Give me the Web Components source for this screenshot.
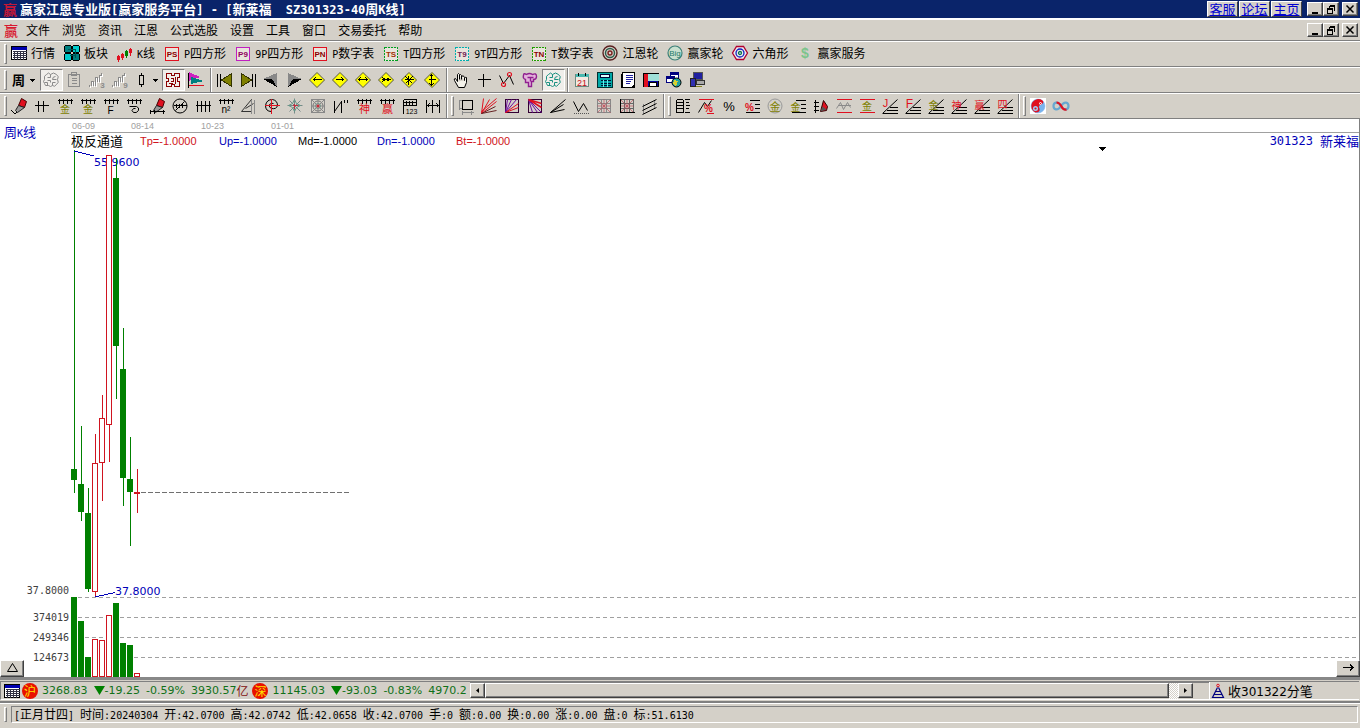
<!DOCTYPE html>
<html lang="zh-CN">
<head>
<meta charset="utf-8">
<title>赢家江恩专业版</title>
<style>
html,body{margin:0;height:100%}
body{background:#d4d0c8;overflow:hidden;font-family:"Noto Sans CJK SC",sans-serif;font-size:12px;color:#000}
</style>
</head>
<body>
<gann-app></gann-app>
<script>
const BASE = `*{box-sizing:border-box}
button{font:inherit;color:inherit;border:0;background:none;padding:0;margin:0;display:block}
svg{display:block;flex:none}
.l{font-family:"DejaVu Sans Mono",monospace;font-size:10px}`;

/* Wraps the half-width runs so they take half the width of a full-width character. */
const mix = s => s.replace(/[\x20-\x7e]+/g, m => `<span class="l">${m}</span>`);

const define = (name, css, html) => customElements.define(name, class extends HTMLElement {
  connectedCallback() {
    if (this.shadowRoot) return;
    const root = this.attachShadow({mode: 'open'});
    root.innerHTML = `<style>${BASE}${css}</style>` + (typeof html === 'function' ? html(this) : html);
  }
});

/* ---------- icons ---------- */
const R = '#e01020', O = '#808000', G = '#8a8a8a', D = '#8b0000', T = '#008080', N = '#000080';
const p = (d, c = '#000', w = 1, f = 'none') => `<path d="${d}" stroke="${c}" stroke-width="${w}" fill="${f}"/>`;
const f = (d, c = '#000') => `<path d="${d}" fill="${c}" transform="translate(-.5 -.5)"/>`;
const c = (x, y, r, s = '#000', w = 1, fl = 'none') => `<circle cx="${x}" cy="${y}" r="${r}" stroke="${s}" stroke-width="${w}" fill="${fl}" shape-rendering="auto"/>`;
const t = (s, x, y, z, col, b = 400) => `<text x="${x}" y="${y}" font-size="${z}" fill="${col}" font-weight="${b}" text-anchor="middle" font-family="Liberation Sans,Noto Sans CJK SC,sans-serif">${s}</text>`;
const comb = p('M0 2H15M2 0V5M6 0V5M10 0V5M14 0V5');
const tag = (s, col, tc, dash) => `<rect x="1" y="1" width="13" height="13" fill="#e9e4dc" stroke="${col}" stroke-width="1.6" ${dash ? 'stroke-dasharray="2 1"' : ''}/>` + t(s, 7.5, 10.5, 8, tc, 700);
const dia = d => `<path d="M7.5 0L15 7.5L7.5 15L0 7.5Z" fill="#ff0" stroke="#554" shape-rendering="auto"/>` + p(d);
const pen = `<path d="M7 7L10 0L15 3L13 9Z" fill="${R}" stroke="#400" shape-rendering="auto"/><path d="M7 7L13 9L6 14L4 12Z" fill="#999" stroke="#222" shape-rendering="auto"/>`;
const fan = `<g shape-rendering="auto">${p('M0 15L15 1')}</g>` + p('M0 15H15M4 12H15M7 9H15');
const grid = col => p('M1 1H14V14H1ZM1 5H14M1 10H14M5 1V14M10 1V14', col);
const soft = s => `<g shape-rendering="auto">${s}</g>`;
const wave = p('M0 12V14M2 13V9H4V13M6 13V5H8V9M10 9V3H12V0', '#fff').replace('<path', '<path transform="translate(1 1)"') + p('M0 12V14M2 13V9H4V13M6 13V5H8V9M10 9V3H12V0', G);
const brain = col => p('M3 2Q5 -1 7 2Q10 -1 13 2Q16 4 14 7Q16 10 13 12Q11 15 9 13Q7 15 5 13Q1 14 1 11Q-1 9 1 7Q0 3 3 2M7 2V5H4M12 4Q9 4 9 7H13M4 13V10H1M9 13V10H12M4 8H7V10', col);
const ICONS = {
  table: `<rect x="0" y="1" width="15" height="13" fill="#fff" stroke="#000"/><path d="M0 2.5H15" stroke="#0000b0" stroke-width="3"/>` + p('M1 6H15M1 8H15M1 10H15M1 12H15M3 5V14M6 5V14M9 5V14M12 5V14', '#334'),
  blocks: [[0,0,T],[8,0,'#0cc'],[0,8,'#0cc'],[8,8,T]].map(a => `<rect x="${a[0]}" y="${a[1]}" width="7" height="7" rx="2" fill="${a[2]}" stroke="#000"/>`).join('') + p('M3 4H11V12M5 10H10', '#055'),
  kline: p('M1 8V15M0 10H2V13H0ZM5 6V13M4 8H6V11H4Z', R) + p('M9 3V11M8 5H10V9H8Z', '#008000') + p('M13 1V9M12 3H14V6H12Z', R),
  PS: tag('PS', R, D), P9: tag('P9', '#c020c0', '#900060'), PN: tag('PN', R, D),
  TS: tag('TS', '#00a020', '#a03000', 1), T9: tag('T9', '#00b0b0', '#702050', 1), TN: tag('TN', '#20a000', D, 1),
  target: c(7.5, 7.5, 7, '#5a2020', 1.4) + c(7.5, 7.5, 4.5, '#2c5a4a', 1.4) + c(7.5, 7.5, 2, '#7a2020', 1.4),
  big: c(7.5, 7.5, 7, '#3c8078', 1.2, '#c9e0d0') + t('Big', 7.5, 10, 8, '#1c7a68'),
  hex: soft(p('M4 1H11L15 7.5L11 14H4L0 7.5Z', '#b00030', 1.3, '#eee')) + c(7.5, 7.5, 4, '#1020c0', 1.3) + c(7.5, 7.5, 1.5, '#087050', 1.3),
  dollar: t('$', 7.5, 12, 14, '#7cc48c', 700),
  cloud: soft(brain(G)), clip: p('M2 2H13V14H2ZM5 0H10V3H5ZM5 6H10M5 8H10M5 11H10', G),
  w3: wave + t('3', 13, 15, 8, G, 700), w9: wave + t('9', 13, 15, 8, G, 700),
  maze: p('M1 1H6V3H9V1H14V5H12V9H14V14H9V12H6V14H1V9H3V6H1ZM5 6H8V9H5M10 4V11M3 11H7', D),
  flag: f('M1 0L12 5L1 9Z', '#d020c0') + f('M3 5L16 9L3 12Z', T) + p('M0 0V15') + p('M0 13H15', R),
  first: p('M0 1V14M3 1V14', '#000', 1.6) + p('M14 1V14L4 7.5Z', '#330', 1, O),
  last: p('M15 1V14M12 1V14', '#000', 1.6) + p('M1 1V14L11 7.5Z', '#330', 1, O),
  prev: f('M0 7L14 1V15L9 8Z', '#888') + f('M0 7H9L14 15L7 11Z'),
  next: f('M16 7L2 1V15L7 8Z', '#888') + f('M16 7H7L2 15L9 11Z'),
  dl: dia('M4 7H12M6 5L4 7L6 9'), dr: dia('M3 7H11M9 5L11 7L9 9'), dlr: dia('M3 7H12M5 5L3 7L5 9M10 5L12 7L10 9'),
  din: dia('M3 7H12M4 5L7 7L4 9M11 5L8 7L11 9'), dx: dia('M4 4L11 11M11 4L4 11M7 3V12M3 7H12'), dud: dia('M7 2V13M5 4L7 2L9 4M5 11L7 13L9 11M4 7H11'),
  hand: soft(p('M4 9L2 6Q0 6 1 8L5 15H11L13 10V5Q12 4 11 6V8M4 9V2Q5 0 6 2V7M6 3Q7 1 8 3V7M8 4Q10 2 11 5V8', '#000', 1, '#f4f2ea')),
  cross: p('M7 1V14M1 7H14'),
  nodes: soft(p('M0 3L4 11L10 3L14 12')) + c(4, 12, 2, R, 1.2) + c(10, 2, 2, R, 1.2),
  wsh: soft(p('M1 3Q1 0 4 2Q7 0 10 2Q14 0 14 4Q14 7 11 7V9H9V14H6V10H3V7Q0 6 1 3M5 5H11M8 5V9', '#902090', 1.4, '#e4b4dc')),
  lobes: soft(brain('#189080')),
  cal: `<rect x="1" y="2" width="13" height="12" fill="#f4e8e0" stroke="#6a8a80"/>` + p('M1 3H14', '#48b8b0', 3) + p('M4 0V3M11 0V3') + t('21', 7.5, 13, 9, '#c01020'),
  calc: `<rect x="0" y="0" width="15" height="15" fill="#00a8a8" stroke="#003030"/><rect x="3" y="2" width="9" height="3" fill="#dff" stroke="#003"/>` + p('M3 8H13M3 11H13M3 13H13', '#013', 1.4) + p('M6 7V14M10 7V14', '#6ee'),
  note: `<rect x="2" y="0" width="12" height="15" fill="#fff" stroke="#000"/>` + p('M1 1V15', '#000', 2) + p('M5 3H12M5 5H12M5 7H12M5 9H10M5 11H9', '#2020a0') + f('M10 16L15 11V16Z', '#000'),
  save: `<rect x="0" y="1" width="15" height="13" fill="#0000a0" stroke="#000"/><path d="M0 1H4V14H0Z" fill="${R}"/><path d="M4 1H15V8H4Z" fill="#9fe0d8"/><path d="M6 10H13V14H6Z" fill="#fff" stroke="#000"/>`,
  globe: `<rect x="4" y="0" width="8" height="6" fill="#fff" stroke="${N}"/><rect x="0" y="4" width="8" height="6" fill="#fff" stroke="${N}"/>` + p('M4 1H12M0 5H8', N, 2) + c(10, 10, 4.5, '#000', 1, '#20a0a0') + f('M8 8L12 9L10 14L7 12Z', '#d8d030'),
  pcs: `<rect x="4" y="0" width="9" height="7" fill="#2020a0" stroke="#555"/><rect x="7" y="8" width="8" height="4" fill="#aaa" stroke="#333"/><rect x="1" y="6" width="5" height="8" fill="#3030b0" stroke="#222"/>` + p('M6 14H12', '#882'),
  pen: pen + p('M0 12L3 15L6 14'), ticks3: p('M0 7H14M4 2V13M9 2V13'),
  gold1: comb + t('金', 7.5, 14, 10, O), gold2: comb + t('金', 7.5, 14, 10, O), combF: comb + t('F', 7, 15, 10, '#000'),
  combS: comb + soft(p('M3 8H10Q13 9 12 12Q10 15 7 14Q4 12 7 10H9')),
  pen2: pen + p('M0 13H15M1 11V15M5 11V15M14 11V15'), gauge: c(7.5, 7.5, 7) + p('M1 7H14M4 5V9M7 5V9M10 5V9') + soft(p('M3 12L12 3')),
  ticks4: p('M0 7H15M2 2V13M6 2V13M10 2V13M14 2V13'), comb2: comb + t('n²', 7.5, 14, 10, '#000'),
  cone: soft(p('M0 13L10 1V13ZM4 10L12 5', '#333')) + p('M10 1V15M13 1V15', G),
  spiral: soft(p('M7 13Q1 13 1 7Q2 1 8 1Q13 2 13 7Q12 11 7 10Q4 9 5 6Q7 4 9 5')) + p('M7 0V15M0 7H15', R, 1),
  star: soft(p('M7 0V15M0 7H15M2 2L13 13M13 2L2 13', '#788') + p('M7 1L9 5L13 7L9 9L7 13L5 9L1 7L5 5Z', '#698')) + p('M5 7H10M7 5V10', '#c03040', 1.6),
  web: p('M1 1H14V14H1Z', '#888') + c(7.5, 7.5, 5, '#777') + c(7.5, 7.5, 2.5, '#698') + soft(p('M1 1L14 14M14 1L1 14M7.5 1V14M1 7.5H14', '#888')) + c(7.5, 7.5, 1, R),
  slash: p('M1 2V14M8 2V14M11 1V4M14 1V4') + soft(p('M1 13L8 3')),
  shen: comb + t('神', 8, 14, 11, R), ying: comb + t('赢', 8, 14, 11, R),
  ruler: p('M1 1V15M1 1H14V7M1 4H14M1 7H14M4 2V6M7 2V6M10 2V6') + t('123', 9, 15, 7, '#000'),
  span: p('M1 1V14M14 1V14M7 1V14M2 7H13M4 5L2 7L4 9M11 5L13 7L11 9'),
  box: p('M4 2H14V11H4Z', '#000', 1.4) + p('M1 1V11M0 2H3M0 10H3M3 14H15M4 12V16M13 12V16', G),
  fan1: soft(p('M0 15L2 0M0 15L8 1M0 15L15 3', R) + p('M0 15L14 8M0 15L15 12', '#622') + p('M0 13L15 0', R)),
  fan2: p('M1 1H14V14H1Z', '#303') + soft(p('M1 14L3 1M1 14L7 1M1 14L12 1', '#7010a0') + p('M1 14L14 5M1 14L14 9', R)),
  fan3: p('M1 1H14V14H1Z', '#303') + soft(p('M1 1L5 14M1 1L10 14M1 1L14 14', '#7010a0') + p('M1 1L14 9M1 1L14 5', R, 1.5)),
  fan4: soft(p('M0 14L15 1M0 14L13 6M0 14L14 11')),
  vee: soft(p('M0 3L5 13L10 5L14 12')) + '<path d="M0 15H15" stroke="#555" stroke-dasharray="1 1"/>',
  grid1: grid('#888') + soft(p('M1 1L14 14M14 1L1 14M7.5 1V14M1 7.5H14', '#c04050', .6)),
  grid2: grid('#666') + soft(p('M1 1L14 14M14 1L1 14M7.5 1V14M1 7.5H14', '#c04050', .6)) + p('M1 0V14H15'),
  chan: p('M1 5V15M12 1V9', G) + soft(p('M0 8L14 1M0 12L14 5M0 16L14 9')),
  rows: p('M1 1V14M8 1V14M1 1H7M1 4H7M1 7H7M1 10H7M1 14H7M9 1H14M10 4H13M10 7H14M10 10H13M9 14H14', '#000', 1.2),
  pct1: p('M0 1H15M8 15H15', R) + soft(p('M0 14L6 4L9 8L13 2')) + t('%', 10, 13, 10, R, 700), pct: t('%', 7.5, 12, 13, '#000'),
  pct2: p('M5 2H15M10 6H15M10 10H15M1 14H15') + t('%', 5, 12, 10, R, 700),
  goldc: c(7.5, 7.5, 7, '#999') + t('金', 7.5, 12, 11, O), goldl: p('M5 2H15M10 6H15M10 10H15M1 14H15') + t('金', 5, 12, 10, O),
  penr: p('M2 1V14M0 4H5M0 8H5M0 12H5') + soft(`<path d="M7 13L10 2L14 8L13 12Z" fill="${R}" stroke="#300"/><path d="M7 13L9 8L13 11Z" fill="#555"/>`),
  sine: p('M0 1H15M0 14H15', R) + soft(p('M0 10L4 4L7 11L11 4L14 9', G)) + p('M1 7H14', G), goldr: p('M0 1H15M0 14H15', R) + t('金', 7.5, 11, 10, O),
  fJ: fan + t('J', 3, 8, 11, R), fF: fan + t('F', 4, 9, 12, R), fG: fan + t('金', 5, 10, 10, O),
  fS: fan + t('神', 5, 10, 10, R), fY: fan + t('赢', 5, 10, 10, R), f4: fan + t('四', 5, 9, 10, R),
  yin: `<rect x="-.5" y="-.5" width="16" height="16" fill="#fff"/>` + c(7.5, 7.5, 7, '#80b0e8', .5, '#78b4ee') + `<path d="M12 2A7 7 0 1 0 5 14Q10 14 9 10Q7 7 11 6Q14 4 12 2Z" fill="${R}" shape-rendering="auto"/>` + c(5, 10, 1.8, '#a0ccf4', 1.4, R) + c(10, 5, 1, '#fff', 1, R),
  inf: soft(p('M7.5 7.5C4 2 0 4 0 7.5S4 13 7.5 7.5S15 4 15 7.5S11 13 7.5 7.5', '#68a8d0', 2.2) + p('M3 4Q6 4 8 8T13 11', R, 2.2)),
  tower: soft(p('M7 4L2 14H13L8 4M4 11H11M5 8H10', N, 1.2)) + c(7.5, 2, 1.3, R)
};
define('g-icon', ':host{display:block;width:16px;height:16px;flex:none}svg{overflow:visible}', el =>
  `<svg width="16" height="16" viewBox="0 0 16 16" shape-rendering="crispEdges" aria-hidden="true"><g transform="translate(.5 .5)">${ICONS[el.getAttribute('name')]}</g></svg>`);

/* ---------- window buttons ---------- */
define('win-buttons', `:host{display:flex}
button{width:16px;height:14px;background:#d4d0c8;border:1px solid;border-color:#fff #404040 #404040 #fff;box-shadow:inset -1px -1px #808080}
button:last-child{margin-left:3px}svg{margin:auto}`,
  ['最小化|M2 8H8', '还原|M4 1H9V6H8M4 2H9M4 1V4M2 4H7V9H2ZM2 5H7', '关闭|M2 1L9 8M9 1L2 8'].map(s => {
    const [a, d] = s.split('|');
    return `<button aria-label="${a}"><svg width="12" height="11" viewBox="0 0 12 11" shape-rendering="${a === '关闭' ? 'auto' : 'crispEdges'}"><path d="${d}" transform="translate(.5 .5)" fill="none" stroke="#000" stroke-width="${a === '还原' ? 1 : a === '关闭' ? 1.5 : 2}"/></svg></button>`;
  }).join(''));

define('title-bar', `:host{display:flex;align-items:center;height:18px;background:#0a246a;color:#fff;padding:0 2px 0 3px;font-size:13px;line-height:18px;font-weight:700;white-space:pre}
.logo{color:#c01838;font-size:14px;width:17px}.l{font-size:12px}h1{font:inherit;margin:0;flex:1}
nav{display:flex;gap:1px;margin-right:5px}
a{display:flex;align-items:center;justify-content:center;width:31px;height:16px;background:#d4d0c8;color:#0000d0;font-weight:400;border:1px solid;border-color:#fff #404040 #404040 #fff;text-decoration:underline;line-height:18px}`,
  `<span class="logo">赢</span><h1>${mix('赢家江恩专业版[赢家服务平台] - [新莱福  SZ301323-40周K线]')}</h1>
<nav><a href="#s">客服</a><a href="#f">论坛</a><a href="#h">主页</a></nav><win-buttons></win-buttons>`);

define('menu-bar', `:host{display:flex;align-items:center;height:23px;border-top:2px solid #fff;border-bottom:1px solid #808080;padding:0 2px 0 4px}
.logo{color:#d81830;font-size:14px;line-height:20px;font-weight:500;width:22px}nav{display:flex;gap:12px;flex:1}button{line-height:18px}`,
  `<span class="logo">赢</span><nav>${'文件 浏览 资讯 江恩 公式选股 设置 工具 窗口 交易委托 帮助'.split(' ').map(s => `<button>${s}</button>`).join('')}</nav><win-buttons></win-buttons>`);

/* ---------- toolbars ---------- */
define('tool-bar', `:host{display:flex;align-items:center;height:26px;border-top:1px solid #fff;border-bottom:1px solid #808080;padding-left:4px}
i{width:3px;height:20px;border:1px solid;border-color:#fff #808080 #808080 #fff;margin-right:var(--lead,1px)}`, '<i></i><slot></slot>');
define('tool-gap', `:host{display:flex;align-self:stretch;align-items:center;width:10px;padding-left:1px}
b{width:2px;align-self:stretch;border-left:1px solid #808080;border-right:1px solid #fff}
i{width:3px;height:20px;margin-left:3px;border:1px solid;border-color:#fff #808080 #808080 #fff}`, '<b></b><i></i>');
define('tool-sep', `:host{display:block;align-self:stretch;width:6px;padding-left:2px}
b{display:block;width:2px;height:100%;border-left:1px solid #808080;border-right:1px solid #fff}`, '<b></b>');
define('tool-button', `:host{display:block}
button{width:23px;height:22px;padding:3px 4px 3px 3px}
:host([pressed]) button{background:#f0eeea;border:1px solid;border-color:#808080 #fff #fff #808080;padding:2px 3px 2px 2px}`,
  el => `<button aria-label="${el.getAttribute('icon')}"><g-icon name="${el.getAttribute('icon')}"></g-icon></button>`);
define('tool-drop', `:host{display:block}
button{display:flex;align-items:center;height:22px;width:32px;padding-left:4px;gap:5px;font-weight:700;font-size:13px;line-height:20px}
:host([candle]) button{width:30px;padding-left:6px;gap:8px}`,
  el => `<button aria-label="周期">${el.hasAttribute('candle')
    ? '<svg width="7" height="14" shape-rendering="crispEdges"><path d="M3.5 0V14" stroke="#000"/><rect x="1.5" y="2.5" width="4" height="9" fill="#d4d0c8" stroke="#000"/></svg>' : '周'}
<svg width="5" height="3" shape-rendering="crispEdges"><path d="M0 0H5L2.5 3Z"/></svg></button>`);
define('text-tool', `:host{display:block}button{display:flex;align-items:center;gap:4px;line-height:18px;white-space:nowrap}`,
  el => `<button><g-icon name="${el.getAttribute('icon')}"></g-icon><span>${mix(el.getAttribute('label'))}</span></button>`);

/* ---------- chart ---------- */
/* Each bar: wick top, wick bottom, body top, body bottom, volume height, kind. */
const BARS = [[0,343,319,330,80,'g'],[276,371,334,362,56,'g'],[338,442,363,439,20,'g'],[284,447,313,442,38,'r'],[245,351,268,313,37,'r'],
  [5,312,5,275,62,'r'],[8,249,28,196,74,'g'],[178,356,219,328,34,'g'],[287,396,329,342,32,'g'],[319,363,342,344,4,'r']];
define('price-chart', `:host{display:flex;flex-direction:column;background:#fff;border-right:1px solid #808080;position:relative;min-height:0}
.dates{display:flex;height:14px;margin-left:71px;border-bottom:1px solid #a0a0a0;color:#a0a0a0;font:9px/15px "Liberation Sans",sans-serif;padding-left:1px}
.dates span{width:70px}.dates span:first-child{width:59px}
.legend{display:flex;height:17px;margin-left:71px;line-height:16px;font-size:13px;white-space:nowrap}
.legend b{font:11px/17px "Liberation Sans",sans-serif;width:79px}.legend>span:first-child{width:69px}
.legend .code{margin-left:auto;color:#0000b8;display:flex;gap:7px}.code .l{font-size:12px}
.period{position:absolute;left:4px;top:4px;color:#0000b8;font-size:13px;line-height:18px}
.period .l{font-size:10px}
.price{flex:1;min-height:0;display:grid;grid-template-columns:71px 1fr}
.vol{height:80px;display:grid;grid-template-columns:71px 1fr}
.price .axis{align-self:end;line-height:12px}.axis{text-align:right;padding-right:2px;color:#404040;font:10px/20px "DejaVu Sans Mono",monospace}
.vol .axis{padding-top:11px}
svg{width:100%;height:100%;overflow:visible}
text{font:11px "DejaVu Sans",sans-serif;fill:#0000b8}
.tri{position:absolute;right:253px;top:28px;width:7px;height:4px}
button{position:absolute;bottom:0;width:24px;height:17px;background:#d4d0c8;border:1px solid;border-color:#fff #404040 #404040 #fff;box-shadow:inset -1px -1px #808080}
button svg{width:22px;height:15px}.up{left:0}.go{right:-1px}`, () => {
  const H = 447, pc = v => (v / H * 100).toFixed(3) + '%', col = k => k === 'g' ? '#008000' : '#d01420';
  let price = '', vol = '';
  BARS.forEach(([wt, wb, bt, bb, v, k], i) => {
    const x = i * 7, s = col(k);
    price += `<rect x="${x + 3}" y="${pc(wt)}" width="1" height="${pc(wb - wt)}" fill="${s}"/><rect x="${x}" y="${pc(bt)}" width="6" height="${pc(bb - bt)}" fill="${s}"/>`;
    if (k === 'r' && bb - bt > 4) price += `<rect x="${x + 1}" y="${pc(bt + 1)}" width="4" height="${pc(bb - bt - 2)}" fill="#fff"/>`;
    vol += `<rect x="${x}" y="${80 - v}" width="6" height="${v}" fill="${s}"/>`;
    if (k === 'r') vol += `<rect x="${x + 1}" y="${81 - v}" width="4" height="${v - 2}" fill="#fff"/>`;
  });
  const lines = [0, 20, 40, 60].map(y => `<line x1="0" x2="100%" y1="${y + .5}" y2="${y + .5}" stroke="#a0a0a0" stroke-dasharray="4 3"/>`).join('');
  return `<span class="period">${mix('周K线')}</span>
<div class="dates"><span>06-09</span><span>08-14</span><span>10-23</span><span>01-01</span></div>
<div class="legend"><span>极反通道</span><b style="color:#d01420">Tp=-1.0000</b><b style="color:#0000b8">Up=-1.0000</b><b>Md=-1.0000</b><b style="color:#0000b8">Dn=-1.0000</b><b style="color:#d01420">Bt=-1.0000</b><span class="code"><span class="l">301323</span><span>新莱福</span></span></div>
<div class="price"><div class="axis">37.8000</div><svg shape-rendering="crispEdges"><text x="23" y="16">55.9600</text>${price}
<line x1="3" y1="1" x2="23" y2="6" stroke="#0000b8"/><line x1="24" y1="100%" x2="44" y2="99%" stroke="#0000b8"/><text x="44" y="99.5%">37.8000</text>
<line x1="70" x2="280" y1="${pc(342.5)}" y2="${pc(342.5)}" stroke="#707070" stroke-dasharray="5 2"/></svg></div>
<div class="vol"><div class="axis">374019<br>249346<br>124673</div><svg shape-rendering="crispEdges">${lines}${vol}</svg></div>
<svg class="tri" viewBox="0 0 7 4" shape-rendering="crispEdges"><path d="M0 0H7L3.5 4Z"/></svg>
<button class="up" aria-label="展开"><svg viewBox="0 0 22 15"><path d="M6.500 10.500H16.500L11.500 2.500Z" fill="none" stroke="#000"/></svg></button>
<button class="go" aria-label="前进"><svg viewBox="0 0 22 15" shape-rendering="crispEdges"><path d="M6 6.500H16M13 3.500L16 6.500L13 9.500" fill="none" stroke="#000"/></svg></button>`;
});

/* ---------- index ticker and scroll bar ---------- */
define('quote-bar', `:host{display:flex;height:24px;border-top:3px solid #888;background:#d4d0c8}
.in{display:flex;flex:1;min-width:0;margin:1px 1px 1px 0;border-top:1px solid #808080;border-bottom:1px solid #fff;border-left:1px solid #808080}
.q{display:flex;align-items:center;width:469px;overflow:hidden;padding-left:3px;font:11px/18px "DejaVu Sans",sans-serif;color:#107018;white-space:nowrap}
.q span{margin-right:6px}.c{font:12px/18px "Noto Sans CJK SC",sans-serif;color:#801010}
.q .amt{margin-right:0}
.disc{flex:none;width:16px;height:16px;border-radius:8px;background:#e81000;color:#ffe000;font:12px/16px "Noto Sans CJK SC",sans-serif;text-align:center}
.q .disc{margin:0 4px 0 2px}.q .c{margin-right:2px}.q .d{margin-right:0}
.sb{flex:1;display:flex;background:#d4d0c8;border:1px solid #808080;border-width:1px 0 0 0;padding-right:16px}
.sb button,.thumb{background:#d4d0c8;border:1px solid;border-color:#fff #404040 #404040 #fff;box-shadow:inset -1px -1px #808080;height:15px}
.sb button{width:15px}.sb button svg{margin:auto}.thumb{flex:1}.track{width:9px;background:repeating-conic-gradient(#fff 0 25%,#d4d0c8 0 50%) 0 0/2px 2px}
.tick{width:150px;border-left:1px solid #fff;display:flex;align-items:center;gap:2px;font-size:13px;line-height:18px;white-space:nowrap}
.tick .n{font:12px "DejaVu Sans",sans-serif}`, () => {
  const down = '<svg width="11" height="9"><path d="M0 0H11L5.500 9Z" fill="#008000"/></svg>';
  return `<div class="in"><div class="q"><g-icon name="table"></g-icon><b class="disc">沪</b><span>3268.83</span><span class="d">${down}</span><span>-19.25</span><span>-0.59%</span><span class="amt">3930.57</span><span class="c">亿</span>
<b class="disc">深</b><span>11145.03</span><span class="d">${down}</span><span>-93.03</span><span>-0.83%</span><span>4970.2</span></div>
<div class="sb"><button aria-label="向左"><svg width="3" height="5"><path d="M3 0V5L0 2.500Z"/></svg></button><div class="thumb"></div><div class="track"></div><button aria-label="向右"><svg width="3" height="5"><path d="M0 0V5L3 2.500Z"/></svg></button></div>
<div class="tick"><g-icon name="tower"></g-icon><span>收<span class="n">301322</span>分笔</span></div></div>`;
});

define('status-bar', `:host{display:flex;flex:none;height:27px;border-top:2px solid #808080;padding:2px 2px 5px 4px;box-shadow:inset 0 1px #fff}
i{width:3px;height:15px;border:1px solid;border-color:#fff #808080 #808080 #fff;margin:2px 4px 0 0}
.in{flex:1;display:flex;gap:6px;border:1px solid;border-color:#808080 #fff #fff #808080;padding:0 2px;line-height:14px;white-space:nowrap;margin-top:1px;height:17px}`,
  `<i></i><div class="in">${'[正月廿四] 时间:20240304 开:42.0700 高:42.0742 低:42.0658 收:42.0700 手:0 额:0.00 换:0.00 涨:0.00 盘:0 标:51.6130'.split(' ').map(s => `<span>${mix(s)}</span>`).join('')}</div>`);

define('gann-app', `:host{display:flex;flex-direction:column;height:100vh;min-height:400px}
price-chart{flex:1}.text{--lead:4px}.text div{display:flex;gap:9px}`, () => {
  const b = s => s.split(' ').map(n => `<tool-button icon="${n.replace('*', '')}"${n.includes('*') ? ' pressed' : ''}></tool-button>`).join('');
  const labels = [['table','行情'],['blocks','板块'],['kline','K线'],['PS','P四方形'],['P9','9P四方形'],['PN','P数字表'],['TS','T四方形'],['T9','9T四方形'],['TN','T数字表'],['target','江恩轮'],['big','赢家轮'],['hex','六角形'],['dollar','赢家服务']];
  return `<title-bar></title-bar><menu-bar></menu-bar>
<tool-bar class="text"><div>${labels.map(a => `<text-tool icon="${a[0]}" label="${a[1]}"></text-tool>`).join('')}</div></tool-bar>
<tool-bar><tool-drop></tool-drop>${b('cloud* clip w3 w9')}<tool-drop candle></tool-drop>${b('maze* flag')}<tool-sep></tool-sep>${b('first last prev next dl dr dlr din dx dud')}<tool-sep></tool-sep>${b('hand cross nodes wsh lobes*')}<tool-sep></tool-sep>${b('cal calc note save globe pcs')}</tool-bar>
<tool-bar>${b('pen ticks3 gold1 gold2 combF combS pen2 gauge ticks4 comb2 cone spiral star web slash shen ying ruler span')}<tool-gap></tool-gap>${b('box fan1 fan2 fan3 fan4 vee grid1 grid2 chan')}<tool-gap></tool-gap>${b('rows pct1 pct pct2 goldc goldl penr sine goldr fJ fF fG fS fY f4')}<tool-gap></tool-gap>${b('yin inf')}</tool-bar>
<price-chart></price-chart><quote-bar></quote-bar><status-bar></status-bar>`;
});
</script>
</body>
</html>
